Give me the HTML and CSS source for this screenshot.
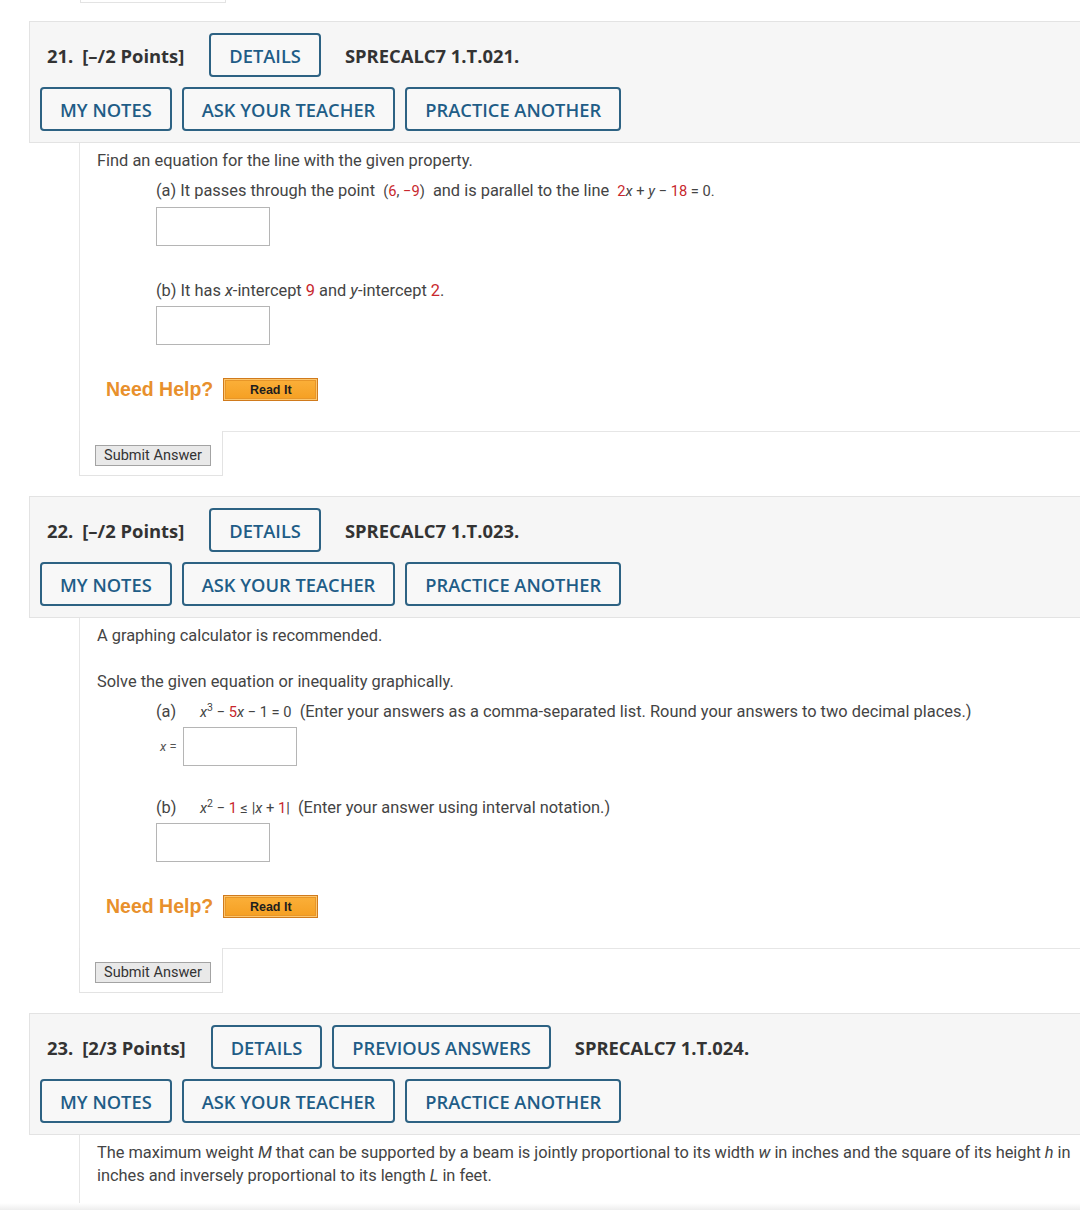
FILE: index.html
```html
<!DOCTYPE html>
<html>
<head>
<meta charset="utf-8">
<link rel="stylesheet" href="styles.css">
</head>
<body>
<div class="page">
  <div class="prev-tab"></div>

  <!-- Question 21 -->
  <div class="question q21">
    <div class="qhead">
      <div class="row row1">
        <span class="qlabel"><span class="qnum">21.</span>[–/2 Points]</span>
        <span class="btn first">DETAILS</span>
        <span class="qcode">SPRECALC7 1.T.021.</span>
      </div>
      <div class="row row2">
        <span class="btn">MY NOTES</span>
        <span class="btn">ASK YOUR TEACHER</span>
        <span class="btn">PRACTICE ANOTHER</span>
      </div>
    </div>
    <div class="qbody b21">
      <p class="line l-intro">Find an equation for the line with the given property.</p>
      <p class="line part l-a">(a) It passes through the point&nbsp; <span class="m">(<span class="r">6</span>, <span class="r">−9</span>)</span>&nbsp; and is parallel to the line&nbsp; <span class="m"><span class="r">2</span><i>x</i> + <i>y</i> − <span class="r">18</span> = 0.</span></p>
      <div class="answer part a1"></div>
      <p class="line part l-b">(b) It has <i>x</i>-intercept <span class="r">9</span> and <i>y</i>-intercept <span class="r">2</span>.</p>
      <div class="answer part a2"></div>
      <div class="help h21">
        <span class="need">Need Help?</span>
        <span class="readit">Read It</span>
      </div>
    </div>
    <div class="submit-tab"><span class="submit">Submit Answer</span></div>
  </div>

  <!-- Question 22 -->
  <div class="question q22">
    <div class="qhead">
      <div class="row row1">
        <span class="qlabel"><span class="qnum">22.</span>[–/2 Points]</span>
        <span class="btn first">DETAILS</span>
        <span class="qcode">SPRECALC7 1.T.023.</span>
      </div>
      <div class="row row2">
        <span class="btn">MY NOTES</span>
        <span class="btn">ASK YOUR TEACHER</span>
        <span class="btn">PRACTICE ANOTHER</span>
      </div>
    </div>
    <div class="qbody b22">
      <p class="line l-calc">A graphing calculator is recommended.</p>
      <p class="line l-solve">Solve the given equation or inequality graphically.</p>
      <p class="line part l-pa"><span class="plabel">(a)</span><span class="m"><i>x</i><sup>3</sup> − <span class="r">5</span><i>x</i> − 1 = 0</span>&nbsp; (Enter your answers as a comma-separated list. Round your answers to two decimal places.)</p>
      <div class="xrow">
        <span class="xlabel"><i>x</i> =</span>
        <div class="answer"></div>
      </div>
      <p class="line part l-pb"><span class="plabel">(b)</span><span class="m"><i>x</i><sup>2</sup> − <span class="r">1</span> ≤ |<i>x</i> + <span class="r">1</span>|</span>&nbsp; (Enter your answer using interval notation.)</p>
      <div class="answer part a3"></div>
      <div class="help h22">
        <span class="need">Need Help?</span>
        <span class="readit">Read It</span>
      </div>
    </div>
    <div class="submit-tab"><span class="submit">Submit Answer</span></div>
  </div>

  <!-- Question 23 -->
  <div class="question q23">
    <div class="qhead">
      <div class="row row1">
        <span class="qlabel"><span class="qnum">23.</span>[2/3 Points]</span>
        <span class="btn first">DETAILS</span>
        <span class="btn">PREVIOUS ANSWERS</span>
        <span class="qcode">SPRECALC7 1.T.024.</span>
      </div>
      <div class="row row2">
        <span class="btn">MY NOTES</span>
        <span class="btn">ASK YOUR TEACHER</span>
        <span class="btn">PRACTICE ANOTHER</span>
      </div>
    </div>
    <div class="qbody b23">
      <p class="line l-beam">The maximum weight <i>M</i> that can be supported by a beam is jointly proportional to its width <i>w</i> in inches and the square of its height <i>h</i> in inches and inversely proportional to its length <i>L</i> in feet.</p>
    </div>
  </div>
</div>
<div class="bottom-shade"></div>
</body>
</html>
```

FILE: styles.css
```css
html, body {
  margin: 0;
  padding: 0;
  background: #ffffff;
  overflow: hidden;
  height: 1210px;
}

.page {
  width: 1120px;
  position: relative;
}

.prev-tab {
  margin-left: 80px;
  width: 144px;
  height: 2px;
  border: 1px solid #e3e3e3;
  border-top: none;
}

.question {
  margin-left: 29px;
}

.q21 { margin-top: 18px; }
.q22 { margin-top: 20px; }
.q23 { margin-top: 20px; }

.qhead {
  background: #f6f6f6;
  border: 1px solid #e3e3e3;
  border-right: none;
  padding: 11px 0 11px 10px;
  font-family: "Open Sans", "Liberation Sans", sans-serif;
}

.row {
  display: flex;
  align-items: center;
  height: 44px;
}

.row2 {
  margin-top: 10px;
  gap: 10px;
}

.qlabel {
  font-weight: 700;
  font-size: 18.4px;
  color: #333333;
  margin-left: 7px;
  margin-right: 25px;
}

.qnum {
  margin-right: 9px;
}

.btn {
  box-sizing: border-box;
  height: 44px;
  display: inline-flex;
  align-items: center;
  justify-content: center;
  padding: 0 18px;
  border: 2px solid #2d6283;
  border-radius: 4px;
  background: #f8f8f8;
  color: #1f5d87;
  font-size: 18.3px;
  font-weight: 600;
  white-space: nowrap;
}

.row1 .btn + .btn {
  margin-left: 10px;
}

.qcode {
  font-weight: 700;
  font-size: 18.4px;
  color: #333333;
  margin-left: 24px;
}

.qbody {
  margin-left: 50px;
  border-left: 1px solid #e6e6e6;
  border-bottom: 1px solid #e6e6e6;
  padding-left: 17px;
  font-family: Roboto, "Liberation Sans", sans-serif;
  font-size: 16.4px;
  color: #444444;
}

.line {
  margin: 0;
  line-height: 23px;
  height: 23px;
  white-space: nowrap;
}

.part {
  margin-left: 59px;
}

.r { color: #c8272d; }

.m {
  font-size: 14.7px;
}

.m sup {
  font-size: 10.5px;
  line-height: 0;
  vertical-align: 6px;
}

.plabel {
  display: inline-block;
  width: 44px;
}

.answer {
  box-sizing: border-box;
  width: 114px;
  height: 39px;
  border: 1px solid #b5b5b5;
  background: #ffffff;
}

/* Q21 spacing */
.b21 { padding-top: 6px; padding-bottom: 30px; }
.b21 .l-a { margin-top: 7px; }
.b21 .a1 { margin-top: 5px; }
.b21 .l-b { margin-top: 33px; }
.b21 .a2 { margin-top: 4px; }
.h21 { margin-top: 33px; }

/* Q22 spacing */
.b22 { padding-top: 6px; padding-bottom: 30px; }
.l-solve { margin-top: 23px; }
.l-pa { margin-top: 7px; }
.xrow {
  display: flex;
  align-items: center;
  margin-top: 4px;
  margin-left: 63px;
}
.xlabel {
  font-size: 13px;
  color: #555555;
  width: 23px;
}
.l-pb { margin-top: 30px; }
.b22 .a3 { margin-top: 4px; }
.h22 { margin-top: 33px; }

/* Q23 */
.b23 {
  padding-top: 6px;
  height: 80px;
  border-bottom: none;
}
.l-beam {
  white-space: normal;
  height: auto;
  width: 990px;
  letter-spacing: -0.03px;
}

.help {
  display: flex;
  align-items: center;
  height: 23px;
  margin-left: 9px;
}

.need {
  font-family: "Liberation Sans", Arial, sans-serif;
  font-weight: 700;
  font-size: 19.5px;
  color: #e8902c;
  margin-right: 10px;
}

.readit {
  box-sizing: border-box;
  width: 95px;
  height: 23px;
  display: inline-flex;
  align-items: center;
  justify-content: center;
  background: linear-gradient(#fbb03a, #f59f22);
  border: 1px solid #d07a1c;
  box-shadow: inset 0 0 0 1px #fcc66e, inset 0 0 0 2px #e89628;
  font-family: "Liberation Sans", Arial, sans-serif;
  font-weight: 700;
  font-size: 12.5px;
  color: #1e1e1e;
}

.submit-tab {
  position: relative;
  margin-left: 50px;
  margin-top: -1px;
  width: 144px;
  height: 45px;
  box-sizing: border-box;
  background: #ffffff;
  border: 1px solid #e3e3e3;
  border-top: none;
  padding: 14px 0 0 15px;
}

.submit {
  box-sizing: border-box;
  display: inline-flex;
  align-items: center;
  justify-content: center;
  width: 116px;
  height: 21px;
  background: #e9e9e9;
  border: 1px solid #a3a3a3;
  font-family: Roboto, "Liberation Sans", sans-serif;
  font-size: 14.5px;
  color: #333333;
}

.bottom-shade {
  position: absolute;
  left: 0;
  top: 1203px;
  width: 1080px;
  height: 7px;
  background: linear-gradient(#ffffff, #eeeeee);
}
```
